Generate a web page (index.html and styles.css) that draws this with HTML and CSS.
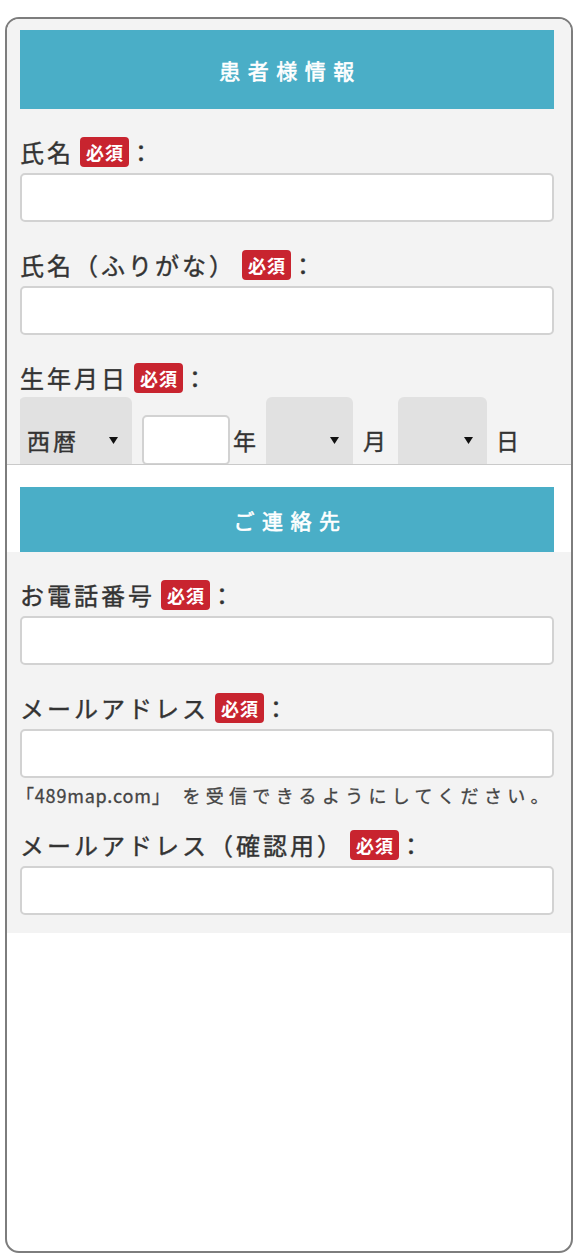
FILE: index.html
```html
<!DOCTYPE html>
<html lang="ja">
<head>
<meta charset="utf-8">
<title>お問い合わせフォーム</title>
<link rel="stylesheet" href="styles.css">
</head>
<body>
<div class="frame">
  <section class="sec-patient">
    <h2 class="bar bar-tall">患者様情報</h2>
    <div class="field">
      <div class="label"><span>氏名</span><span class="req">必須</span><span class="colon">：</span></div>
      <input class="input" type="text">
    </div>
    <div class="field">
      <div class="label"><span>氏名（ふりがな）</span><span class="req">必須</span><span class="colon">：</span></div>
      <input class="input" type="text">
    </div>
    <div class="field">
      <div class="label"><span>生年月日</span><span class="req">必須</span><span class="colon">：</span></div>
      <div class="date-clip">
        <div class="date-row">
          <div class="sel sel-era"><span class="sel-text">西暦</span><svg class="arrow" width="9" height="7" viewBox="0 0 9 7"><polygon points="0,0 9,0 4.5,7"/></svg></div>
          <input class="year" type="text">
          <span class="unit unit-year">年</span>
          <div class="sel sel-month"><span class="sel-text"></span><svg class="arrow" width="9" height="7" viewBox="0 0 9 7"><polygon points="0,0 9,0 4.5,7"/></svg></div>
          <span class="unit unit-month">月</span>
          <div class="sel sel-day"><span class="sel-text"></span><svg class="arrow" width="9" height="7" viewBox="0 0 9 7"><polygon points="0,0 9,0 4.5,7"/></svg></div>
          <span class="unit unit-day">日</span>
        </div>
      </div>
    </div>
  </section>
  <section class="sec-contact">
    <div class="contact-head">
      <h2 class="bar bar-short">ご連絡先</h2>
    </div>
    <div class="contact-body">
      <div class="field">
        <div class="label"><span>お電話番号</span><span class="req">必須</span><span class="colon">：</span></div>
        <input class="input" type="text">
      </div>
      <div class="field">
        <div class="label"><span>メールアドレス</span><span class="req">必須</span><span class="colon">：</span></div>
        <input class="input" type="text">
        <p class="note"><span class="url">「489map.com」</span>を受信できるようにしてください。</p>
      </div>
      <div class="field field-after-note">
        <div class="label"><span>メールアドレス（確認用）</span><span class="req">必須</span><span class="colon">：</span></div>
        <input class="input" type="text">
      </div>
    </div>
  </section>
</div>
</body>
</html>
```

FILE: styles.css
```css
body {
  margin: 0;
  background: #ffffff;
  font-family: "Noto Sans CJK JP", "Noto Sans", sans-serif;
}

.frame {
  box-sizing: border-box;
  width: 568px;
  height: 1236px;
  margin: 17px 0 0 5px;
  border: 2px solid #7d7d7d;
  border-radius: 14px;
  overflow: hidden;
  background: #ffffff;
}

.sec-patient {
  background: #f3f3f3;
  padding: 11px 17px 0 13px;
  border-bottom: 1px solid #cacaca;
}

.bar {
  margin: 0;
  background: #4aaec7;
  color: #ffffff;
  font-size: 21px;
  font-weight: normal;
  -webkit-text-stroke: 0.6px #ffffff;
  letter-spacing: 7.5px;
  padding-left: 7px;
  display: flex;
  align-items: center;
  justify-content: center;
}

.bar-tall {
  height: 79px;
}

.bar-short {
  height: 65px;
}

.contact-head {
  padding: 22px 17px 0 13px;
}

.contact-body {
  background: #f3f3f3;
  padding: 0 17px 18px 13px;
  overflow: hidden;
}

.field {
  margin-top: 28px;
}

.field-after-note {
  margin-top: 18px;
}

.label {
  display: flex;
  align-items: center;
  height: 30px;
  line-height: 30px;
  font-size: 24px;
  letter-spacing: 3px;
  color: #333333;
  -webkit-text-stroke: 0.4px #333333;
  white-space: nowrap;
}

.req {
  margin-left: 6px;
  background: #c8242f;
  color: #ffffff;
  -webkit-text-stroke: 0;
  font-size: 18px;
  font-weight: bold;
  letter-spacing: 1px;
  height: 30px;
  line-height: 30px;
  padding: 0 5px 0 6px;
  border-radius: 4px;
}

.input {
  display: block;
  box-sizing: border-box;
  width: 100%;
  height: 49px;
  margin: 6px 0 0;
  border: 2px solid #d2d2d2;
  border-radius: 5px;
  background: #ffffff;
  outline: none;
}

.date-clip {
  margin-top: 4px;
  height: 67px;
  overflow: hidden;
}

.date-row {
  display: flex;
  align-items: center;
  height: 86px;
  font-size: 23px;
  color: #333333;
  -webkit-text-stroke: 0.4px #333333;
}

.sel {
  box-sizing: border-box;
  height: 86px;
  background: #e1e1e1;
  border-radius: 6px;
  display: flex;
  align-items: center;
  justify-content: space-between;
  padding: 0 14px 0 8px;
  letter-spacing: 3px;
}

.sel-era {
  width: 113px;
  margin-left: -1px;
}

.sel-month {
  width: 87px;
}

.sel-day {
  width: 89px;
}

.arrow {
  fill: #111111;
}

.year {
  box-sizing: border-box;
  width: 88px;
  height: 50px;
  margin: 0 0 0 10px;
  border: 2px solid #d2d2d2;
  border-radius: 5px;
  background: #ffffff;
  outline: none;
}

.unit {
  line-height: 30px;
}

.unit-year {
  margin: 0 10px 0 3px;
}

.unit-month {
  margin: 0 12px 0 10px;
}

.unit-day {
  margin-left: 9px;
}

.note {
  margin: 0;
  font-size: 18px;
  line-height: 34px;
  letter-spacing: 5.3px;
  color: #444444;
  -webkit-text-stroke: 0.3px #444444;
  white-space: nowrap;
}

.url {
  letter-spacing: 0.8px;
  margin-left: -4px;
  margin-right: 12px;
}
```
